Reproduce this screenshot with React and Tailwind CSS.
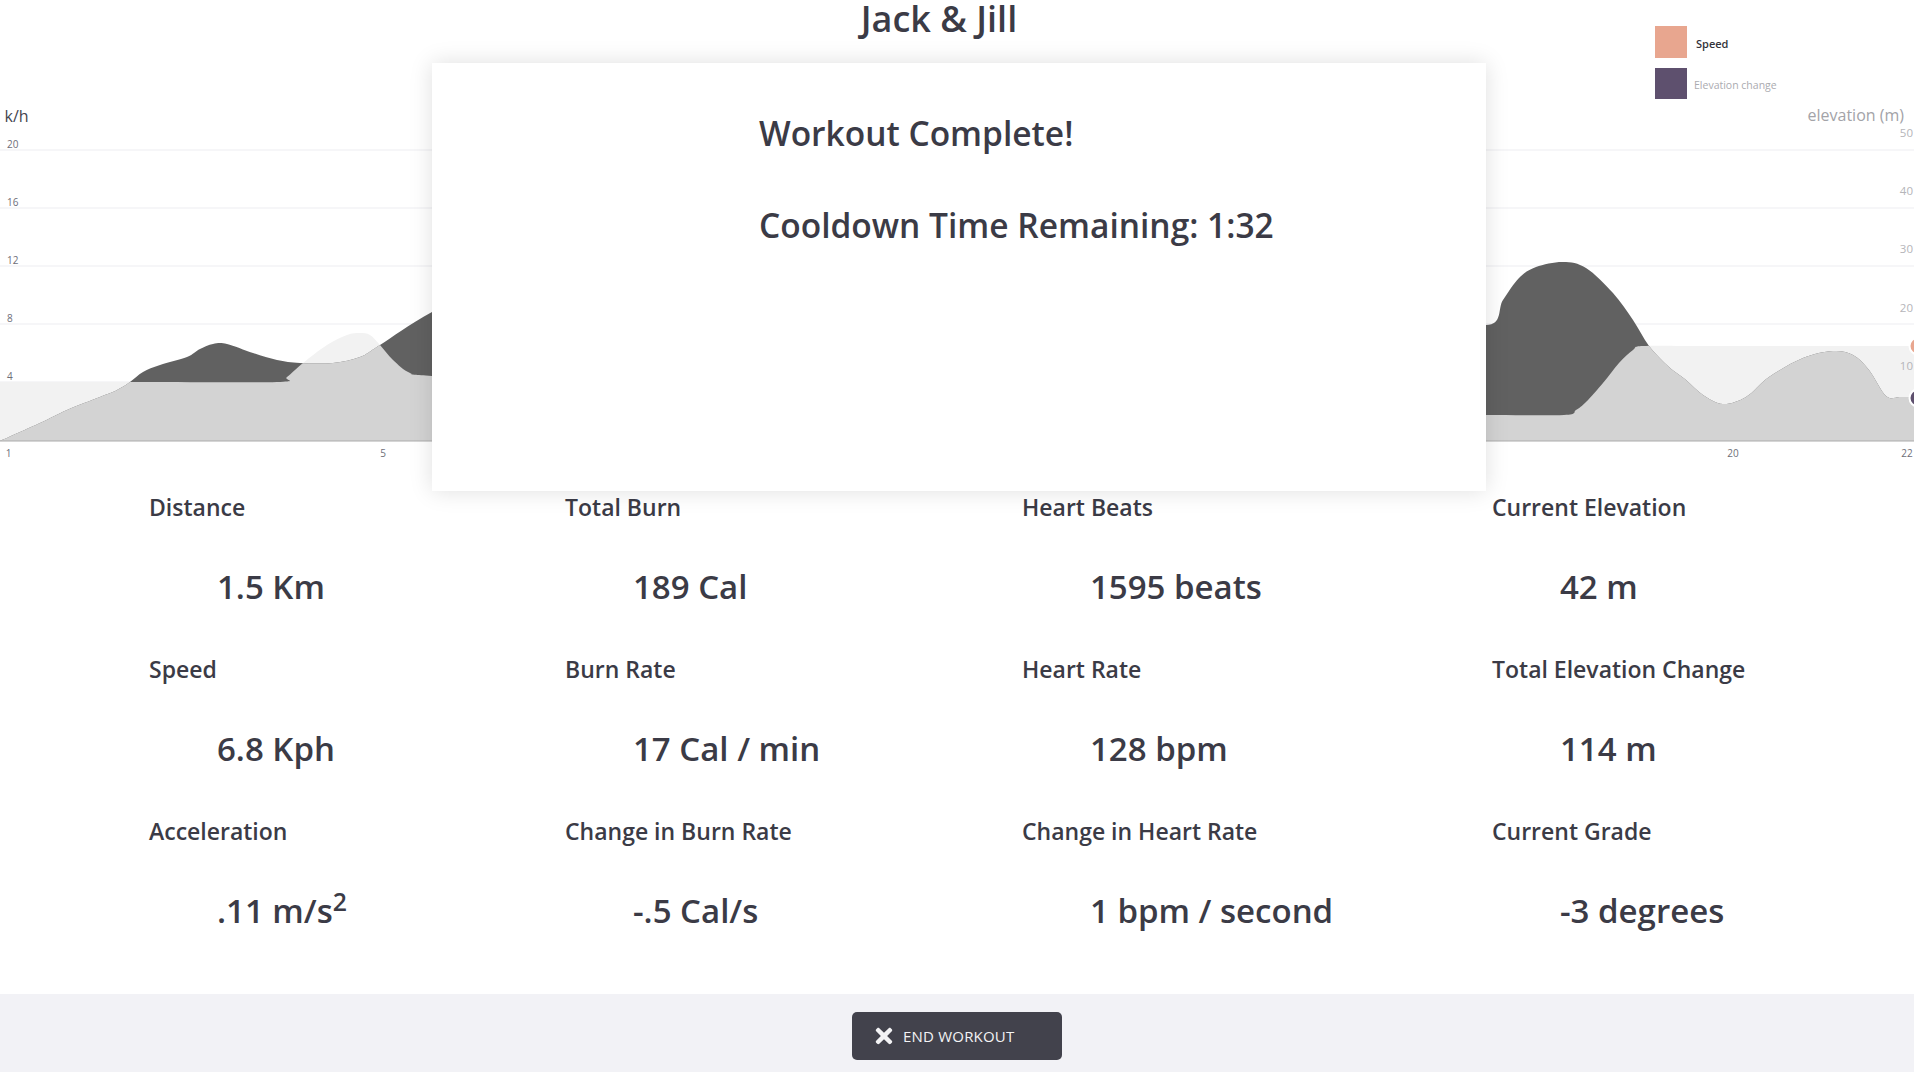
import { FaTimes } from 'react-icons/fa';

// chart points in page pixels (the svg viewBox starts at the page's y = 38)
const speed = [
  [0, 382], [140, 382], [277, 382], [287, 377], [303, 363], [327, 345], [347, 335],
  [360, 333], [370, 335], [380, 345], [393, 360], [410, 373], [432, 376],
  [600, 390], [900, 400], [1200, 410], [1400, 415], [1486, 415], [1564, 415],
  [1576, 410], [1586, 402], [1603, 383], [1619, 363], [1633, 350], [1643, 346],
  [1700, 346], [1800, 346], [1914, 346],
];

const elevation = [
  [0, 441], [40, 423], [67, 410], [100, 397], [117, 390], [130, 382], [143, 372],
  [160, 365], [187, 357], [200, 349], [213, 344], [227, 344], [253, 353], [277, 360],
  [300, 363], [333, 363], [360, 357], [380, 345], [432, 312], [520, 270], [800, 300],
  [1100, 260], [1400, 300], [1486, 325], [1503, 300], [1519, 278], [1536, 267],
  [1563, 262], [1586, 268], [1613, 293], [1633, 320], [1649, 346], [1669, 367],
  [1686, 380], [1703, 395], [1723, 404], [1746, 397], [1769, 377], [1803, 358],
  [1833, 351], [1853, 355], [1869, 370], [1886, 396], [1900, 397], [1914, 397],
];

function smooth(pts) {
  let d = `M${pts[0][0]},${pts[0][1]}`;
  for (let i = 0; i < pts.length - 1; i++) {
    const p0 = pts[i - 1] || pts[i];
    const p1 = pts[i];
    const p2 = pts[i + 1];
    const p3 = pts[i + 2] || p2;
    const c1x = p1[0] + (p2[0] - p0[0]) / 6;
    const c1y = p1[1] + (p2[1] - p0[1]) / 6;
    const c2x = p2[0] - (p3[0] - p1[0]) / 6;
    const c2y = p2[1] - (p3[1] - p1[1]) / 6;
    d += ` C${c1x},${c1y} ${c2x},${c2y} ${p2[0]},${p2[1]}`;
  }
  return d;
}

const area = (pts) => `${smooth(pts)} L1914,441 L0,441 Z`;

const gridY = [150, 208, 266, 324, 382];
const leftTicks = [
  ['20', 147.5], ['16', 205.5], ['12', 263.5], ['8', 321.5], ['4', 379.5],
];
const rightTicks = [
  ['50', 137], ['40', 195], ['30', 253], ['20', 312], ['10', 370],
];
const xTicks = [
  ['1', 8.5], ['5', 383], ['10', 833], ['15', 1283], ['20', 1733], ['22', 1907],
];

const stats = [
  ['Distance', '1.5 Km'],
  ['Total Burn', '189 Cal'],
  ['Heart Beats', '1595 beats'],
  ['Current Elevation', '42 m'],
  ['Speed', '6.8 Kph'],
  ['Burn Rate', '17 Cal / min'],
  ['Heart Rate', '128 bpm'],
  ['Total Elevation Change', '114 m'],
  ['Acceleration', 'accel'],
  ['Change in Burn Rate', '-.5 Cal/s'],
  ['Change in Heart Rate', '1 bpm / second'],
  ['Current Grade', '-3 degrees'],
];

function Chart() {
  return (
    <svg
      width="1914"
      height="453"
      viewBox="0 38 1914 453"
      className="block w-[1914px] h-[453px]"
    >
      <defs>
        <clipPath id="speedClip">
          <path d={area(speed)} />
        </clipPath>
      </defs>

      {gridY.map((y) => (
        <line key={y} x1="0" x2="1914" y1={y} y2={y} stroke="#ededf1" strokeWidth="1" />
      ))}

      <path d={area(speed)} fill="#f2f2f2" />
      <path d={area(elevation)} fill="#616161" />
      <path d={area(elevation)} fill="#d3d3d3" clipPath="url(#speedClip)" />

      <line x1="0" x2="1914" y1="441" y2="441" stroke="#ababab" strokeWidth="1.2" />

      <text x="4.5" y="122" fontSize="16" fill="#45454f" fontFamily="'Open Sans', sans-serif">
        k/h
      </text>
      <text
        x="1904"
        y="121"
        fontSize="16"
        fill="#a3a3a8"
        textAnchor="end"
        fontFamily="'Open Sans', sans-serif"
      >
        elevation (m)
      </text>

      {leftTicks.map(([t, y]) => (
        <text key={t} x="7" y={y} fontSize="10" fill="#6e6e78" fontFamily="'Open Sans', sans-serif">
          {t}
        </text>
      ))}
      {rightTicks.map(([t, y]) => (
        <text
          key={t}
          x="1913"
          y={y}
          fontSize="11.5"
          fill="#b5b5b9"
          textAnchor="end"
          fontFamily="'Open Sans', sans-serif"
        >
          {t}
        </text>
      ))}
      {xTicks.map(([t, x]) => (
        <text
          key={t}
          x={x}
          y="456.5"
          fontSize="10"
          fill="#6e6e78"
          textAnchor="middle"
          fontFamily="'Open Sans', sans-serif"
        >
          {t}
        </text>
      ))}

      <circle cx="1918" cy="346" r="8.5" fill="#e8a68f" stroke="#fff" strokeWidth="2" />
      <circle cx="1918" cy="398" r="8.5" fill="#5e506e" stroke="#fff" strokeWidth="2" />
    </svg>
  );
}

export default function App() {
  return (
    <div className="w-full h-[1072px] flex flex-col overflow-hidden bg-white text-[#3b3b46] font-['Open_Sans',sans-serif]">
      {/* Header + chart */}
      <div className="relative h-[491px] shrink-0">
        <h1 className="text-center text-[36px] leading-[38px] font-semibold pr-[36px]">
          Jack &amp; Jill
        </h1>
        <Chart />

        {/* Legend */}
        <div className="absolute left-[1655px] top-[26px] flex flex-col gap-[10px]">
          <div className="flex items-center">
            <span className="w-8 h-8 bg-[#e8a68f]" />
            <span className="ml-[9px] mt-[5px] text-[11px] font-semibold text-[#33333a]">
              Speed
            </span>
          </div>
          <div className="flex items-center">
            <span className="w-8 h-[31px] bg-[#5e506e]" />
            <span className="ml-[7px] mt-[5px] text-[10.5px] text-[#ababb0]">
              Elevation change
            </span>
          </div>
        </div>

        {/* Modal */}
        <div className="absolute left-[432px] top-[63px] w-[1054px] h-[428px] bg-white shadow-[0_0_22px_rgba(0,0,0,0.13)] pl-[327px] pt-[48px]">
          <p className="text-[33.5px] leading-[45px] font-semibold">Workout Complete!</p>
          <p className="mt-[47px] text-[33.5px] leading-[45px] font-semibold">
            Cooldown Time Remaining: 1:32
          </p>
        </div>
      </div>

      {/* Stats */}
      <div className="h-[503px] shrink-0 grid grid-cols-[416px_457px_470px_1fr] content-start gap-y-[43px] pl-[149px]">
        {stats.map(([label, value]) => (
          <div key={label} className="flex flex-col">
            <p className="text-[23px] leading-[33px] font-semibold">{label}</p>
            <p className="mt-[40px] pl-[68px] text-[33px] leading-[46px] font-semibold whitespace-nowrap">
              {value === 'accel' ? (
                <>
                  .11 m/s<sup>2</sup>
                </>
              ) : (
                value
              )}
            </p>
          </div>
        ))}
      </div>

      {/* Footer */}
      <div className="h-[78px] shrink-0 bg-[#f2f2f6] flex justify-center pt-[18px]">
        <button className="w-[210px] h-[48px] rounded-[5px] bg-[#42424c] text-[#f3f3f5] flex items-center pl-[20px] gap-[7px]">
          <FaTimes size={24} />
          <span className="text-[15px] font-medium tracking-[0.2px]">END WORKOUT</span>
        </button>
      </div>
    </div>
  );
}
